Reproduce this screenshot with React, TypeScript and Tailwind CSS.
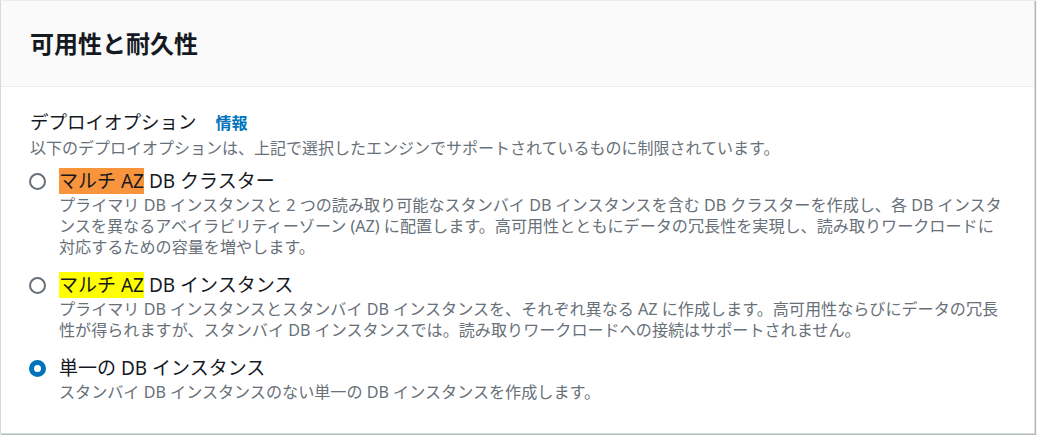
import type { ReactNode } from "react";

const font = { fontFamily: '"Noto Sans", "Noto Sans CJK JP", sans-serif' };

function Radio({ checked }: { checked?: boolean }) {
  return checked ? (
    <span className="mt-[4px] block h-[17px] w-[17px] shrink-0 rounded-full border-[5px] border-[#0073bb] bg-white" />
  ) : (
    <span className="mt-[4px] block h-[17px] w-[17px] shrink-0 rounded-full border-2 border-[#687078] bg-white" />
  );
}

function Option({
  checked,
  label,
  lines,
}: {
  checked?: boolean;
  label: ReactNode;
  lines: string[];
}) {
  return (
    <div className="flex gap-[13px] -ml-px">
      <Radio checked={checked} />
      <div className="flex flex-col">
        <div className="text-[19px] leading-[24px] text-[#16191f]">{label}</div>
        <div className="mt-[2px] text-[16.1px] leading-[21px] text-[#687078]">
          {lines.map((l) => (
            <div key={l} className="whitespace-nowrap">
              {l}
            </div>
          ))}
        </div>
      </div>
    </div>
  );
}

export default function App() {
  return (
    <div className="h-[435px] w-[1037px] bg-white" style={font}>
      <div className="h-[434px] w-[1035px] border border-[#d5dbdb] border-t-[#eaeded] bg-white shadow-[1px_1px_1px_0_rgba(0,28,36,0.3)]">
        <div className="flex h-[86px] items-center border-b border-[#eaeded] bg-[#fafafa] px-[29px]">
          <h2 className="text-[24px] font-bold leading-[30px] text-[#16191f]">可用性と耐久性</h2>
        </div>
        <div className="px-[29px] pt-[23px]">
          <div className="flex items-baseline text-[18.5px] leading-[24px] text-[#16191f]">
            <span>デプロイオプション</span>
            <a className="ml-[19px] text-[16px] font-bold text-[#0073bb]">情報</a>
          </div>
          <div className="mt-[3px] text-[16px] leading-[21px] text-[#687078]">
            以下のデプロイオプションは、上記で選択したエンジンでサポートされているものに制限されています。
          </div>
          <div className="mt-[10px] flex flex-col gap-[15px]">
            <Option
              label={
                <>
                  <span className="bg-[#f8943c]">マルチ AZ</span> DB クラスター
                </>
              }
              lines={[
                "プライマリ DB インスタンスと 2 つの読み取り可能なスタンバイ DB インスタンスを含む DB クラスターを作成し、各 DB インスタ",
                "ンスを異なるアベイラビリティーゾーン (AZ) に配置します。高可用性とともにデータの冗長性を実現し、読み取りワークロードに",
                "対応するための容量を増やします。",
              ]}
            />
            <Option
              label={
                <>
                  <span className="bg-[#ffff00]">マルチ AZ</span> DB インスタンス
                </>
              }
              lines={[
                "プライマリ DB インスタンスとスタンバイ DB インスタンスを、それぞれ異なる AZ に作成します。高可用性ならびにデータの冗長",
                "性が得られますが、スタンバイ DB インスタンスでは。読み取りワークロードへの接続はサポートされません。",
              ]}
            />
            <Option
              checked
              label="単一の DB インスタンス"
              lines={["スタンバイ DB インスタンスのない単一の DB インスタンスを作成します。"]}
            />
          </div>
        </div>
      </div>
    </div>
  );
}
